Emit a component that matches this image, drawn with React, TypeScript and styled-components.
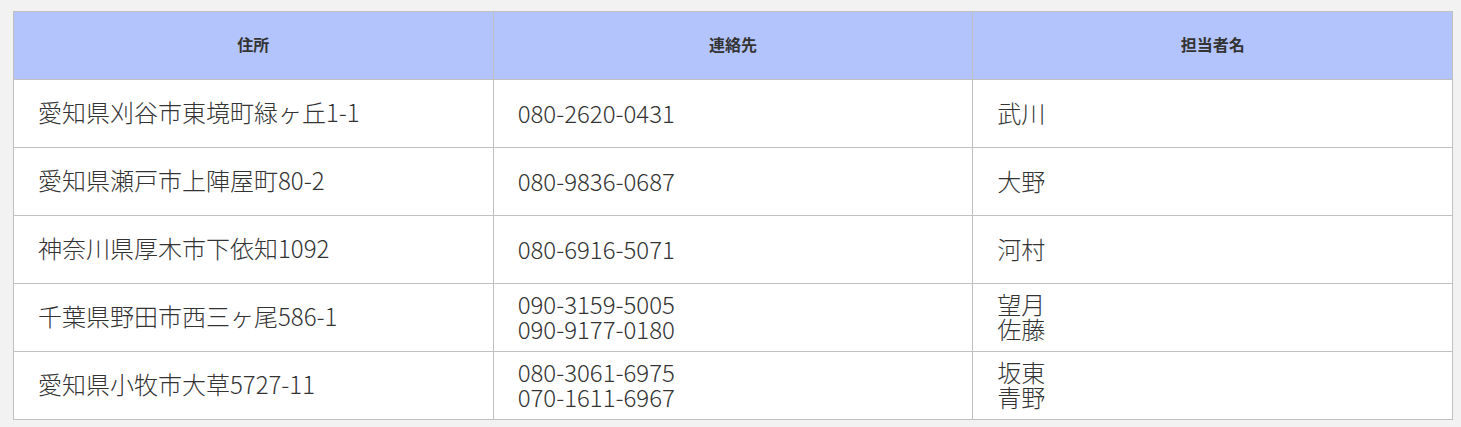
import React from "react";
import styled, { createGlobalStyle } from "styled-components";

const GlobalStyle = createGlobalStyle`
  html, body {
    margin: 0;
    padding: 0;
    background: #f2f2f2;
  }
`;

type Contact = {
  address: string;
  phones: string[];
  names: string[];
};

const contacts: Contact[] = [
  { address: "愛知県刈谷市東境町緑ヶ丘1-1", phones: ["080-2620-0431"], names: ["武川"] },
  { address: "愛知県瀬戸市上陣屋町80-2", phones: ["080-9836-0687"], names: ["大野"] },
  { address: "神奈川県厚木市下依知1092", phones: ["080-6916-5071"], names: ["河村"] },
  {
    address: "千葉県野田市西三ヶ尾586-1",
    phones: ["090-3159-5005", "090-9177-0180"],
    names: ["望月", "佐藤"],
  },
  {
    address: "愛知県小牧市大草5727-11",
    phones: ["080-3061-6975", "070-1611-6967"],
    names: ["坂東", "青野"],
  },
];

const App = () => {
  return (
    <Page>
      <GlobalStyle />
      <Table>
        <thead>
          <tr>
            <HeadCell>住所</HeadCell>
            <HeadCell>連絡先</HeadCell>
            <HeadCell>担当者名</HeadCell>
          </tr>
        </thead>
        <tbody>
          {contacts.map((c) => (
            <tr key={c.address}>
              <Cell>{c.address}</Cell>
              <Cell>
                {c.phones.map((p) => (
                  <Line key={p}>{p}</Line>
                ))}
              </Cell>
              <Cell>
                {c.names.map((n) => (
                  <Line key={n}>{n}</Line>
                ))}
              </Cell>
            </tr>
          ))}
        </tbody>
      </Table>
    </Page>
  );
};

const Page = styled.div`
  padding: 11px 9px 8px 13px;
  background: #f2f2f2;
  min-height: 427px;
  box-sizing: border-box;
`;

const Table = styled.table`
  width: 1440px;
  border-collapse: collapse;
  table-layout: fixed;
  background: #ffffff;
  font-family: "Noto Sans CJK JP", "Noto Sans", sans-serif;
`;

const HeadCell = styled.th`
  height: 68px;
  padding: 0 0 4px;
  box-sizing: border-box;
  background: #b3c4fd;
  border: 1px solid #c0c0c0;
  color: #333333;
  font-size: 16px;
  font-weight: 700;
  text-align: center;
  vertical-align: middle;
`;

const Cell = styled.td`
  height: 68px;
  padding: 0 24px 3px;
  box-sizing: border-box;
  border: 1px solid #c0c0c0;
  color: #333333;
  font-size: 24px;
  font-weight: 300;
  line-height: 26px;
  vertical-align: middle;
  text-align: left;
`;

const Line = styled.div`
  line-height: 25px;
`;

export default App;
